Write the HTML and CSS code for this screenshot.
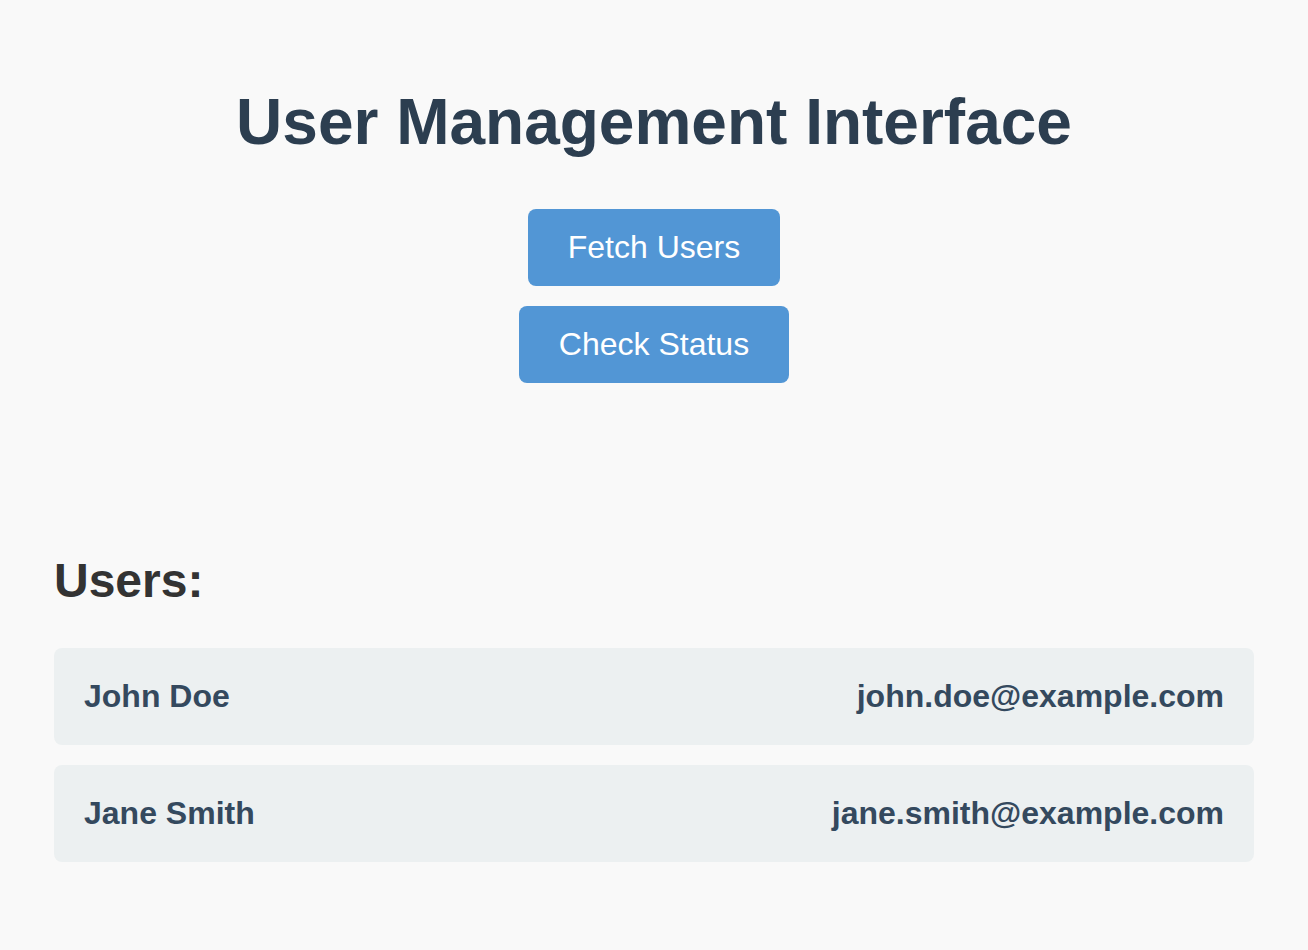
FILE: index.html
```html
<!DOCTYPE html>
<html lang="en">
<head>
<meta charset="utf-8">
<title>User Management Interface</title>
<link rel="stylesheet" href="styles.css">
</head>
<body>
<div class="app">
  <header class="header">
    <h1 class="title">User Management Interface</h1>
    <div class="actions">
      <button class="btn">Fetch Users</button>
      <button class="btn">Check Status</button>
    </div>
  </header>
  <section class="users">
    <h2 class="users-title">Users:</h2>
    <ul class="user-list">
      <li class="user-card"><span class="user-name">John Doe</span><span class="user-email">john.doe@example.com</span></li>
      <li class="user-card"><span class="user-name">Jane Smith</span><span class="user-email">jane.smith@example.com</span></li>
    </ul>
  </section>
</div>
</body>
</html>
```

FILE: styles.css
```css
* { box-sizing: border-box; }
html, body {
  margin: 0;
  padding: 0;
  background: #f9f9f9;
  font-family: "Liberation Sans", Arial, sans-serif;
}
.app {
  max-width: 1200px;
  margin: 0 auto;
  padding-top: 85px;
}
.header {
  display: flex;
  flex-direction: column;
  align-items: center;
}
.title {
  margin: 0 0 50px;
  font-size: 64px;
  font-weight: bold;
  color: #2c3e50;
  text-align: center;
}
.actions {
  display: flex;
  flex-direction: column;
  align-items: center;
  gap: 20px;
}
.btn {
  font-family: inherit;
  font-size: 32px;
  line-height: normal;
  color: #fff;
  background: #5296d5;
  border: none;
  border-radius: 8px;
  padding: 20px 40px;
  cursor: pointer;
}
.users {
  margin-top: 170px;
}
.users-title {
  margin: 0 0 40px;
  font-size: 48px;
  font-weight: bold;
  color: #333;
}
.user-list {
  list-style: none;
  margin: 0;
  padding: 0;
  display: flex;
  flex-direction: column;
  gap: 20px;
}
.user-card {
  display: flex;
  justify-content: space-between;
  align-items: center;
  background: #ecf0f1;
  border-radius: 8px;
  padding: 30px;
  font-size: 32px;
  font-weight: bold;
  color: #34495e;
}
```
